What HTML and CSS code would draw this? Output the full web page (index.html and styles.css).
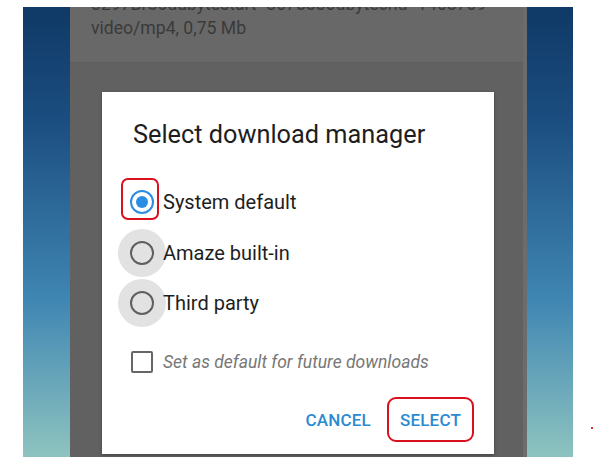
FILE: index.html
```html
<!DOCTYPE html>
<html>
<head>
<meta charset="utf-8">
<link rel="stylesheet" href="styles.css">
</head>
<body>
<div class="phone">
  <div class="strip"></div>
  <div class="app">
    <div class="info">
      <div class="line cut">3297Br86dubytestart=3078830dbytecnd=1408709</div>
      <div class="line">video/mp4, 0,75 Mb</div>
    </div>
    <div class="rest"></div>
    <div class="edge"></div>
  </div>
  <div class="strip"></div>
</div>
<span class="dot"></span>

<div class="dialog">
  <div class="title">Select download manager</div>
  <div class="options">
    <div class="row">
      <span class="hl"></span>
      <span class="radio-wrap"><span class="radio checked"></span></span>
      <span class="label">System default</span>
    </div>
    <div class="row">
      <span class="radio-wrap pressed"><span class="radio"></span></span>
      <span class="label">Amaze built-in</span>
    </div>
    <div class="row">
      <span class="radio-wrap pressed"><span class="radio"></span></span>
      <span class="label">Third party</span>
    </div>
  </div>
  <div class="check-row">
    <span class="checkbox"></span>
    <span class="check-label">Set as default for future downloads</span>
  </div>
  <div class="buttons">
    <span class="btn">CANCEL</span>
    <span class="btn boxed">SELECT</span>
  </div>
</div>
</body>
</html>
```

FILE: styles.css
```css
html, body {
  margin: 0;
  padding: 0;
  background: #ffffff;
  font-family: Roboto, "Noto Sans", sans-serif;
}
body {
  width: 594px;
  height: 468px;
  position: relative;
  overflow: hidden;
}
.phone {
  display: flex;
  margin: 7px 0 0 23px;
  width: 550px;
  height: 450px;
}
.strip {
  width: 47px;
  flex: none;
  background: linear-gradient(180deg, #0f3966 0%, #1b4d80 25%, #3f86b3 65%, #8ec3bf 100%);
}
.strip:last-child {
  width: 46px;
}
.app {
  width: 457px;
  display: flex;
  flex-direction: column;
  position: relative;
  background: #616161;
}
.info {
  height: 55px;
  background: #686868;
  border-bottom: 1px solid #5d5d5d;
  padding-left: 21px;
  overflow: hidden;
}
.line {
  font-size: 17.6px;
  line-height: 24px;
  color: #3a3a3a;
  white-space: nowrap;
}
.cut {
  margin-top: -15px;
}
.rest {
  flex: 1;
}
.edge {
  position: absolute;
  right: 0;
  top: 0;
  bottom: 0;
  width: 4px;
  background: #6c6c6c;
}
.dot {
  position: absolute;
  left: 591px;
  top: 427px;
  width: 2px;
  height: 2px;
  background: #d33;
}
.dialog {
  position: absolute;
  left: 102px;
  top: 92px;
  width: 392px;
  height: 362px;
  box-sizing: border-box;
  background: #ffffff;
  box-shadow: 0 1px 3px rgba(0,0,0,0.35);
  padding: 28px 0 0 0;
  display: flex;
  flex-direction: column;
}
.title {
  padding-left: 31px;
  font-size: 25.3px;
  line-height: 30px;
  color: #1e1e1e;
}
.options {
  margin-top: 27px;
  display: flex;
  flex-direction: column;
}
.row {
  height: 50.5px;
  display: flex;
  align-items: center;
  padding-left: 16px;
  position: relative;
}
.radio-wrap {
  width: 48px;
  height: 48px;
  border-radius: 50%;
  display: flex;
  align-items: center;
  justify-content: center;
  flex: none;
}
.radio-wrap.pressed {
  background: #e2e2e2;
}
.radio {
  width: 24px;
  height: 24px;
  box-sizing: border-box;
  border-radius: 50%;
  border: 2.5px solid #5f5f5f;
  display: flex;
  align-items: center;
  justify-content: center;
}
.radio.checked {
  border-color: #2a8de4;
}
.radio.checked::after {
  content: "";
  width: 12px;
  height: 12px;
  border-radius: 50%;
  background: #2a8de4;
}
.label {
  margin-left: -3px;
  font-size: 20px;
  color: #1e1e1e;
}
.hl {
  position: absolute;
  left: 19px;
  top: 1px;
  width: 38px;
  height: 42px;
  box-sizing: border-box;
  border: 2px solid #d9101e;
  border-radius: 7px;
}
.check-row {
  margin-top: 15.5px;
  height: 36px;
  display: flex;
  align-items: center;
  padding-left: 29px;
}
.checkbox {
  width: 22px;
  height: 22px;
  box-sizing: border-box;
  border: 2.5px solid #666666;
  border-radius: 2px;
  flex: none;
}
.check-label {
  margin-left: 10px;
  font-size: 17.5px;
  font-style: italic;
  color: #777777;
}
.buttons {
  margin-top: 17px;
  display: flex;
  justify-content: flex-end;
  align-items: center;
  padding-right: 20px;
  gap: 16px;
}
.btn {
  font-size: 17px;
  font-weight: 500;
  color: #2c8ad2;
  letter-spacing: 0.2px;
  height: 45px;
  display: flex;
  align-items: center;
}
.boxed {
  box-sizing: border-box;
  width: 87px;
  justify-content: center;
  border: 2px solid #d9101e;
  border-radius: 9px;
}
```
